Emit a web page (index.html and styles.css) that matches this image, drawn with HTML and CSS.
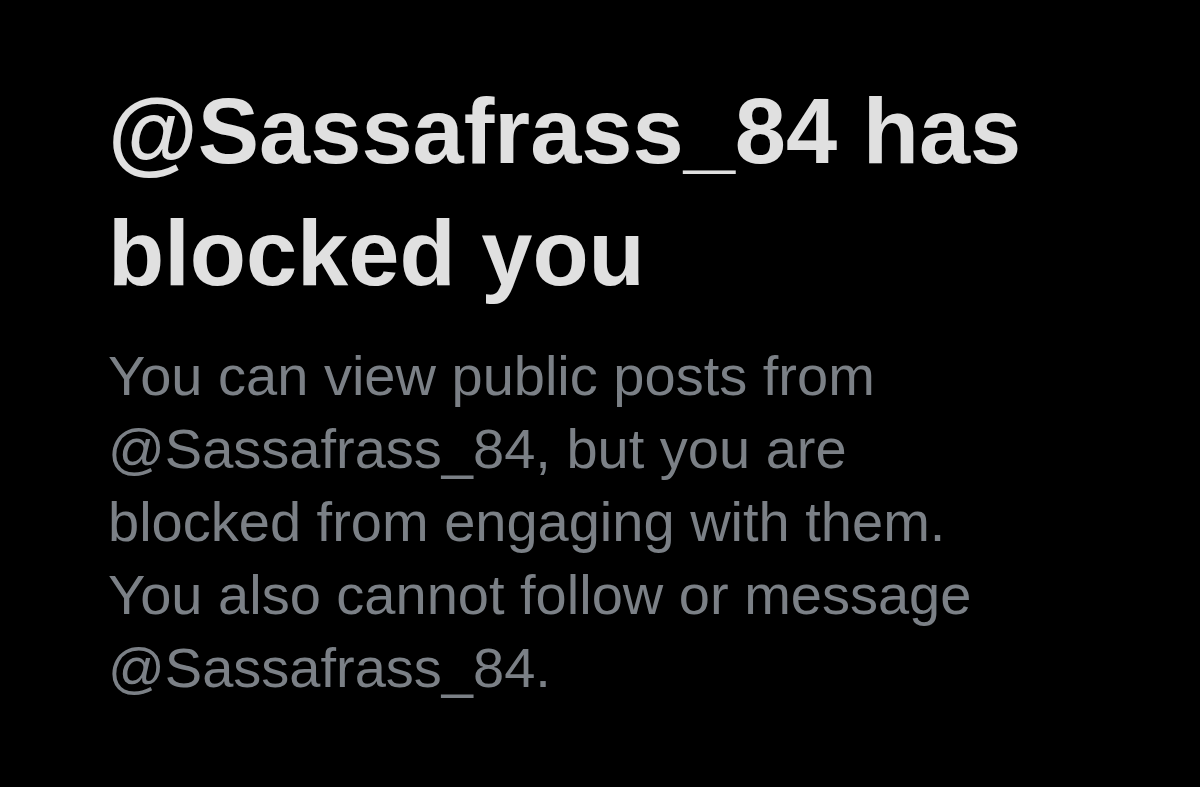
FILE: index.html
```html
<!DOCTYPE html>
<html lang="en">
<head>
    <meta charset="UTF-8">
    <meta name="viewport" content="width=device-width, initial-scale=1.0">
    <title>Blocked</title>
    <link rel="stylesheet" href="styles.css">
</head>
<body>
    <div class="blocked">
        <h1 class="blocked-title">@Sassafrass_84 has blocked you</h1>
        <p class="blocked-text">You can view public posts from @Sassafrass_84, but you are blocked from engaging with them. You also cannot follow or message @Sassafrass_84.</p>
    </div>
</body>
</html>
```

FILE: styles.css
```css
html,
body {
    margin: 0;
    padding: 0;
    background-color: #000;
    height: 100%;
}

.blocked {
    padding: 70px 0 0 108px;
    font-family: "Liberation Sans", Arial, sans-serif;
}

.blocked-title {
    margin: 0;
    font-size: 92px;
    line-height: 122px;
    font-weight: bold;
    color: #e0e0e0;
    max-width: 960px;
}

.blocked-text {
    margin: 25px 0 0;
    font-size: 56px;
    line-height: 73px;
    color: #7b8086;
    max-width: 890px;
}
```
